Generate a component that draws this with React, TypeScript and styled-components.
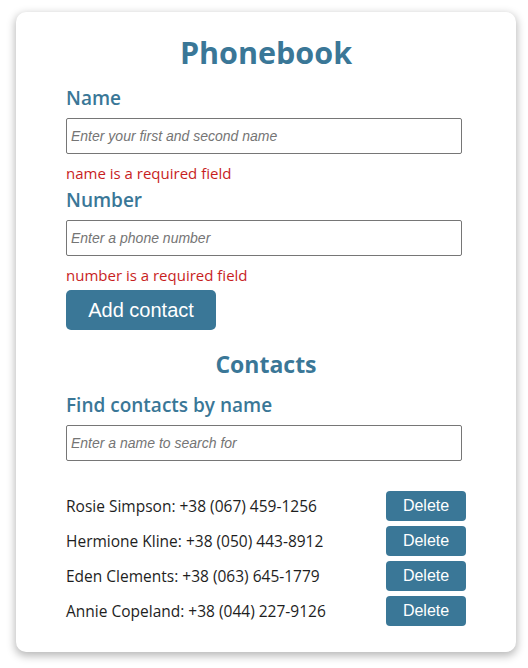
import React from "react";
import styled, { createGlobalStyle } from "styled-components";

const GlobalStyle = createGlobalStyle`
  * { box-sizing: border-box; }
  body {
    margin: 0;
    background: #ffffff;
    font-family: "Open Sans", "Noto Sans", sans-serif;
  }
`;

const Page = styled.div`
  padding: 12px 12px 16px 16px;
  width: 528px;
`;

const Card = styled.div`
  width: 500px;
  background: #ffffff;
  border-radius: 10px;
  box-shadow: 0 3px 8px 1px rgba(0, 0, 0, 0.28);
  padding: 20px 50px 26px;
  display: flex;
  flex-direction: column;
`;

const Title = styled.h1`
  margin: 0;
  text-align: center;
  color: #3a7797;
  font-size: 30.5px;
  line-height: 40px;
  font-weight: 700;
`;

const SubTitle = styled.h2`
  margin: 19px 0 0;
  text-align: center;
  color: #3a7797;
  font-size: 23px;
  line-height: 30px;
  font-weight: 700;
`;

const Form = styled.form`
  display: flex;
  flex-direction: column;
  align-items: flex-start;
`;

const Label = styled.label<{ $top: number }>`
  color: #3a7797;
  font-size: 19px;
  font-weight: 600;
  line-height: 26px;
  margin-top: ${(p) => p.$top}px;
`;

const Input = styled.input`
  width: 396px;
  height: 36px;
  margin-top: 7px;
  border: 1px solid #767676;
  border-radius: 2px;
  padding: 0 4px;
  font-family: "Liberation Sans", Arial, sans-serif;
  font-size: 14px;
  &::placeholder {
    color: #757575;
    font-style: italic;
  }
`;

const ErrorText = styled.p`
  margin: 9px 0 0;
  color: #c81e1e;
  font-size: 15px;
  line-height: 20px;
`;

const PrimaryButton = styled.button`
  margin-top: 5px;
  width: 150px;
  height: 40px;
  border: none;
  border-radius: 5px;
  background: #3a7797;
  color: #ffffff;
  font-family: "Liberation Sans", Arial, sans-serif;
  font-size: 20px;
`;

const List = styled.ul`
  list-style: none;
  margin: 30px 0 0;
  padding: 0;
  display: flex;
  flex-direction: column;
  gap: 5px;
`;

const Row = styled.li`
  display: flex;
  align-items: center;
  justify-content: space-between;
  height: 30px;
  font-size: 15.5px;
  color: #1e1e1e;
`;

const DeleteButton = styled.button`
  width: 80px;
  height: 30px;
  border: none;
  border-radius: 4px;
  background: #3a7797;
  color: #ffffff;
  font-family: "Liberation Sans", Arial, sans-serif;
  font-size: 16px;
`;

const contacts = [
  { id: 1, name: "Rosie Simpson", number: "+38 (067) 459-1256" },
  { id: 2, name: "Hermione Kline", number: "+38 (050) 443-8912" },
  { id: 3, name: "Eden Clements", number: "+38 (063) 645-1779" },
  { id: 4, name: "Annie Copeland", number: "+38 (044) 227-9126" },
];

export default function App() {
  return (
    <>
      <GlobalStyle />
      <Page>
        <Card>
          <Title>Phonebook</Title>
          <Form onSubmit={(e) => e.preventDefault()}>
            <Label $top={13}>Name</Label>
            <Input placeholder="Enter your first and second name" />
            <ErrorText>name is a required field</ErrorText>
            <Label $top={4}>Number</Label>
            <Input placeholder="Enter a phone number" />
            <ErrorText>number is a required field</ErrorText>
            <PrimaryButton type="submit">Add contact</PrimaryButton>
          </Form>
          <SubTitle>Contacts</SubTitle>
          <Form>
            <Label $top={13}>Find contacts by name</Label>
            <Input placeholder="Enter a name to search for" />
          </Form>
          <List>
            {contacts.map((c) => (
              <Row key={c.id}>
                <span>
                  {c.name}: {c.number}
                </span>
                <DeleteButton type="button">Delete</DeleteButton>
              </Row>
            ))}
          </List>
        </Card>
      </Page>
    </>
  );
}
